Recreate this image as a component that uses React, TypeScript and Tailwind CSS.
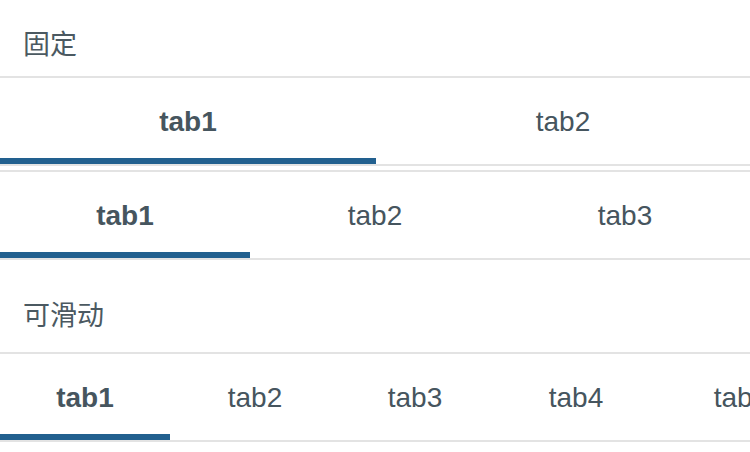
import React from "react";

const font = { fontFamily: '"Liberation Sans", "Noto Sans CJK SC", sans-serif' };

function Header({ title, className }: { title: string; className: string }) {
  return (
    <div className={`px-[23px] text-[27px] leading-[28px] text-[#4b5961] ${className}`}>
      {title}
    </div>
  );
}

function Tabs({
  labels,
  widths,
  className = "",
}: {
  labels: string[];
  widths: string[];
  className?: string;
}) {
  return (
    <div className={`border-y-2 border-[#e3e3e3] overflow-hidden ${className}`}>
      <div className="flex h-[86px]">
        {labels.map((label, i) => (
          <div
            key={label}
            className={`relative shrink-0 flex items-center justify-center pt-[2px] text-[28px] text-[#46555e] ${widths[i]} ${
              i === 0 ? "font-bold" : "font-normal"
            }`}
          >
            {label}
            {i === 0 && (
              <div className="absolute bottom-0 left-0 right-0 h-[6px] bg-[#22608f]" />
            )}
          </div>
        ))}
      </div>
    </div>
  );
}

export default function App() {
  return (
    <div className="w-[750px] h-[452px] bg-white overflow-hidden" style={font}>
      <Header title="固定" className="pt-[31px] pb-[17px]" />
      <Tabs labels={["tab1", "tab2"]} widths={["w-[376px]", "w-[374px]"]} />
      <Tabs
        labels={["tab1", "tab2", "tab3"]}
        widths={["w-[250px]", "w-[250px]", "w-[250px]"]}
        className="mt-[4px]"
      />
      <Header title="可滑动" className="pt-[42px] pb-[22px]" />
      <Tabs
        labels={["tab1", "tab2", "tab3", "tab4", "tab5"]}
        widths={["w-[170px]", "w-[170px]", "w-[150px]", "w-[172px]", "w-[158px]"]}
      />
    </div>
  );
}
